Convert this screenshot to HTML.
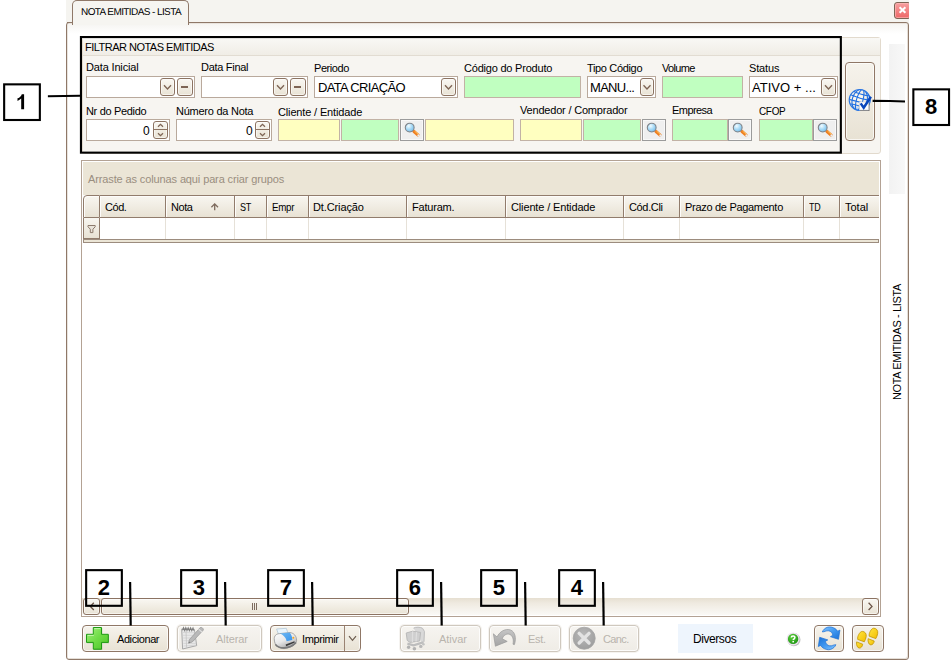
<!DOCTYPE html>
<html>
<head>
<meta charset="utf-8">
<title>NOTA EMITIDAS - LISTA</title>
<style>
*{box-sizing:border-box;margin:0;padding:0}
html,body{width:952px;height:661px;overflow:hidden;background:#fff}
body{position:relative;font-family:"Liberation Sans",sans-serif;font-size:11px;color:#000}
.a,svg{position:absolute}
.t{position:absolute;white-space:nowrap;line-height:13px;font-size:11px;color:#000}
.fld{position:absolute;height:22px;border:1px solid #b9a99c;background:#fff}
.g{background:#c0ffc0;border-color:#c2b2a5}
.y{background:#ffffc0;border-color:#c2b2a5}
.btn{position:absolute;border:1px solid #8c7362;border-radius:3px;background:linear-gradient(#f9f7f2,#e9e3d5);box-shadow:inset 0 0 0 1px rgba(255,255,255,.55)}
.mb{position:absolute;width:24px;height:22px;border:1px solid #9b9b9b;background:#efefef;box-shadow:inset 0 0 0 1px #f8f8f8}
.big{position:absolute;border:1px solid #8f7766;border-radius:4px;background:linear-gradient(#f6f3ec,#e8e2d4);box-shadow:inset 0 0 0 1px rgba(255,255,255,.7)}
.dis{border-color:#cfc8be;background:linear-gradient(#f6f4f0,#efece6);box-shadow:inset 0 0 0 1px rgba(255,255,255,.8),0 0 0 1px rgba(225,220,212,.35)}
.ann{position:absolute;width:38px;height:38px;border:2px solid #000}
.ln{position:absolute;background:#000}
.hd{position:absolute;top:195px;height:23px;border:1px solid #917c6c;border-left:none;background:linear-gradient(#f8f6f0,#f1ede4 45%,#e8e2d4);box-shadow:inset 1px 1px 0 #fdfcfa}
.fc{position:absolute;top:218px;height:21px;border-right:1px solid #e6e1d8;background:#fff}
</style>
</head>
<body>
<!-- top strip + window frame -->
<div class="a" style="left:66px;top:0;width:843px;height:24px;background:#f5f4f0"></div>
<div class="a" style="left:66px;top:22px;width:843px;height:638px;border:1px solid #8f7868;border-radius:3px;background:#fff;box-shadow:inset 1px 1px 0 #e9e4de,inset -1px -1px 0 #e4ded7"></div>
<div class="a" style="left:68px;top:24px;width:839px;height:10px;background:linear-gradient(#f6f5f2,#fff)"></div>
<!-- tab -->
<div class="a" style="left:72px;top:0;width:117px;height:25px;border:1px solid #8f7868;border-bottom:none;border-radius:5px 5px 0 0;background:#f6f5f1"></div>
<div class="a" style="left:67px;top:22px;width:6px;height:1px;background:#8f7868"></div>
<!-- close btn -->
<div class="a" style="left:894px;top:2px;width:17px;height:17px;border:1px solid #7d6555;border-radius:3px;background:linear-gradient(#f6a0a0,#ee6868);box-shadow:inset 0 0 0 1px rgba(255,190,190,.6)"></div>
<svg style="left:894px;top:2px" width="17" height="17"><path d="M5.6 5.2L11.4 10.8M11.4 5.2L5.6 10.8" stroke="#fff" stroke-width="2" fill="none"/></svg>
<div class="a" style="left:909px;top:0;width:43px;height:661px;background:#fff"></div>

<!-- right strip + vertical caption -->
<div class="a" style="left:889px;top:44px;width:16px;height:150px;background:linear-gradient(90deg,#f2f2f2,#f8f8f8)"></div>

<!-- filter group -->
<div class="a" style="left:82px;top:37px;width:799px;height:117px;background:#f7f5f1;border:1px solid #e2dacd;border-radius:3px"></div>
<div class="a" style="left:83px;top:38px;width:797px;height:18px;background:linear-gradient(#f9f8f5,#f0ede6);border-bottom:1px solid #e2dcd2"></div>

<!-- row1 fields -->
<div class="fld" style="left:86px;top:76px;width:109px"></div>
<div class="btn" style="left:160px;top:78px;width:15px;height:18px"></div>
<svg style="left:160px;top:78px" width="15" height="18"><path d="M4 7.2L7.5 11L11 7.2" stroke="#7d6454" stroke-width="1.3" fill="none"/></svg>
<div class="btn" style="left:177px;top:78px;width:16px;height:18px"></div>
<div class="a" style="left:181px;top:86px;width:7px;height:2px;background:#7d6454"></div>
<div class="fld" style="left:201px;top:76px;width:107px"></div>
<div class="btn" style="left:273px;top:78px;width:15px;height:18px"></div>
<svg style="left:273px;top:78px" width="15" height="18"><path d="M4 7.2L7.5 11L11 7.2" stroke="#7d6454" stroke-width="1.3" fill="none"/></svg>
<div class="btn" style="left:290px;top:78px;width:16px;height:18px"></div>
<div class="a" style="left:294px;top:86px;width:7px;height:2px;background:#7d6454"></div>
<div class="fld" style="left:314px;top:76px;width:144px"></div>
<div class="btn" style="left:441px;top:78px;width:15px;height:18px"></div>
<svg style="left:441px;top:78px" width="15" height="18"><path d="M4 7.2L7.5 11L11 7.2" stroke="#7d6454" stroke-width="1.3" fill="none"/></svg>
<div class="fld g" style="left:464px;top:76px;width:117px"></div>
<div class="fld" style="left:587px;top:76px;width:69px"></div>
<div class="btn" style="left:640px;top:78px;width:14px;height:18px"></div>
<svg style="left:640px;top:78px" width="14" height="18"><path d="M3.5 7.2L7 11L10.5 7.2" stroke="#7d6454" stroke-width="1.3" fill="none"/></svg>
<div class="fld g" style="left:662px;top:76px;width:81px"></div>
<div class="fld" style="left:749px;top:76px;width:89px"></div>
<div class="btn" style="left:821px;top:78px;width:15px;height:18px"></div>
<svg style="left:821px;top:78px" width="15" height="18"><path d="M4 7.2L7.5 11L11 7.2" stroke="#7d6454" stroke-width="1.3" fill="none"/></svg>

<!-- row2 fields -->
<div class="fld" style="left:86px;top:119px;width:84px"></div>
<div class="btn" style="left:153px;top:121px;width:15px;height:18px"></div>
<div class="a" style="left:154px;top:129px;width:13px;height:1px;background:#8c7362"></div>
<svg style="left:153px;top:121px" width="15" height="18"><path d="M5 5.8L7.5 3.4L10 5.8M5 12.2L7.5 14.6L10 12.2" stroke="#7d6454" stroke-width="1.3" fill="none"/></svg>
<div class="fld" style="left:176px;top:119px;width:96px"></div>
<div class="btn" style="left:255px;top:121px;width:15px;height:18px"></div>
<div class="a" style="left:256px;top:129px;width:13px;height:1px;background:#8c7362"></div>
<svg style="left:255px;top:121px" width="15" height="18"><path d="M5 5.8L7.5 3.4L10 5.8M5 12.2L7.5 14.6L10 12.2" stroke="#7d6454" stroke-width="1.3" fill="none"/></svg>
<div class="fld y" style="left:278px;top:119px;width:62px"></div>
<div class="fld g" style="left:341px;top:119px;width:58px"></div>
<div class="mb" style="left:400px;top:119px"></div>
<div class="fld y" style="left:425px;top:119px;width:89px"></div>
<div class="fld y" style="left:520px;top:119px;width:62px"></div>
<div class="fld g" style="left:583px;top:119px;width:58px"></div>
<div class="mb" style="left:642px;top:119px"></div>
<div class="fld g" style="left:672px;top:119px;width:56px"></div>
<div class="mb" style="left:728px;top:119px"></div>
<div class="fld g" style="left:759px;top:119px;width:54px"></div>
<div class="mb" style="left:813px;top:119px"></div>
<svg width="0" height="0"><defs>
<radialGradient id="lens" cx="38%" cy="32%" r="75%"><stop offset="0" stop-color="#f2fbff"/><stop offset=".5" stop-color="#a9dbf7"/><stop offset="1" stop-color="#6fbaec"/></radialGradient>
</defs></svg>
<svg style="left:400px;top:119px" width="24" height="22"><path d="M12.6 11.3L14 12.5" stroke="#6f6f6f" stroke-width="1.6"/><path d="M14 12.5L18.1 16.1" stroke="#ef7f22" stroke-width="3.1" stroke-linecap="round"/><path d="M14.6 12.2L18.4 15.3" stroke="#ffc85a" stroke-width=".9"/><path d="M18.2 16.3L18.9 16.9" stroke="#e8eef4" stroke-width="1.8" stroke-linecap="round"/><circle cx="9.7" cy="8.6" r="4.4" fill="url(#lens)" stroke="#80858b" stroke-width="1.1"/></svg>
<svg style="left:642px;top:119px" width="24" height="22"><path d="M12.6 11.3L14 12.5" stroke="#6f6f6f" stroke-width="1.6"/><path d="M14 12.5L18.1 16.1" stroke="#ef7f22" stroke-width="3.1" stroke-linecap="round"/><path d="M14.6 12.2L18.4 15.3" stroke="#ffc85a" stroke-width=".9"/><path d="M18.2 16.3L18.9 16.9" stroke="#e8eef4" stroke-width="1.8" stroke-linecap="round"/><circle cx="9.7" cy="8.6" r="4.4" fill="url(#lens)" stroke="#80858b" stroke-width="1.1"/></svg>
<svg style="left:728px;top:119px" width="24" height="22"><path d="M12.6 11.3L14 12.5" stroke="#6f6f6f" stroke-width="1.6"/><path d="M14 12.5L18.1 16.1" stroke="#ef7f22" stroke-width="3.1" stroke-linecap="round"/><path d="M14.6 12.2L18.4 15.3" stroke="#ffc85a" stroke-width=".9"/><path d="M18.2 16.3L18.9 16.9" stroke="#e8eef4" stroke-width="1.8" stroke-linecap="round"/><circle cx="9.7" cy="8.6" r="4.4" fill="url(#lens)" stroke="#80858b" stroke-width="1.1"/></svg>
<svg style="left:813px;top:119px" width="24" height="22"><path d="M12.6 11.3L14 12.5" stroke="#6f6f6f" stroke-width="1.6"/><path d="M14 12.5L18.1 16.1" stroke="#ef7f22" stroke-width="3.1" stroke-linecap="round"/><path d="M14.6 12.2L18.4 15.3" stroke="#ffc85a" stroke-width=".9"/><path d="M18.2 16.3L18.9 16.9" stroke="#e8eef4" stroke-width="1.8" stroke-linecap="round"/><circle cx="9.7" cy="8.6" r="4.4" fill="url(#lens)" stroke="#80858b" stroke-width="1.1"/></svg>

<!-- big globe button -->
<div class="big" style="left:845px;top:62px;width:30px;height:79px"></div>
<svg style="left:844px;top:84px" width="34" height="32"><defs>
<radialGradient id="gg" cx="40%" cy="36%" r="68%"><stop offset="0" stop-color="#fffdf6"/><stop offset=".6" stop-color="#f1ece4"/><stop offset=".85" stop-color="#a9c8f0"/><stop offset="1" stop-color="#2f7be0"/></radialGradient>
<clipPath id="gc"><circle cx="15.7" cy="16" r="10.7"/></clipPath></defs>
<circle cx="15.7" cy="16" r="10.7" fill="url(#gg)"/>
<g clip-path="url(#gc)" stroke="#2270e0" stroke-width="1.1" fill="none" transform="rotate(16 15.7 16)">
<ellipse cx="15.7" cy="16" rx="3.2" ry="10.9"/><ellipse cx="15.7" cy="16" rx="7.4" ry="10.9"/>
<path d="M4 8.6Q15.7 11.4 27.4 8.6M4 13.4Q15.7 15 27.4 13.4M4 18.4Q15.7 17.6 27.4 18.4M4 23Q15.7 20.6 27.4 23"/>
</g>
<circle cx="15.7" cy="16" r="10.5" fill="none" stroke="#2a76e2" stroke-width="1.1"/>
<rect x="16.1" y="18.8" width="9.4" height="8.2" fill="#6f6f6f"/>
<rect x="15.3" y="18" width="9.3" height="8" fill="#fff" stroke="#c9cdd4" stroke-width=".6"/>
<path d="M16.7 19.4L19.7 23.8L26.9 12.8" stroke="#0a47bc" stroke-width="2.5" fill="none" stroke-linejoin="miter"/>
</svg>

<!-- grid -->
<div class="a" style="left:81px;top:160px;width:800px;height:457px;border:1px solid #b3a294;background:#fff"></div>
<div class="a" style="left:83px;top:162px;width:796px;height:33px;background:#ebe5d6"></div>
<div class="hd" style="left:83px;width:17px;border-left:1px solid #917c6c;border-radius:4px 0 0 0"></div>
<div class="hd" style="left:100px;width:66px"></div>
<div class="hd" style="left:166px;width:69px"></div>
<div class="hd" style="left:235px;width:32px"></div>
<div class="hd" style="left:267px;width:42px"></div>
<div class="hd" style="left:309px;width:98px"></div>
<div class="hd" style="left:407px;width:99px"></div>
<div class="hd" style="left:506px;width:118px"></div>
<div class="hd" style="left:624px;width:56px"></div>
<div class="hd" style="left:680px;width:124px"></div>
<div class="hd" style="left:804px;width:36px"></div>
<div class="hd" style="left:840px;width:39px;border-right:none"></div>
<svg style="left:210px;top:203px" width="10" height="9"><path d="M4.7 .9V7.3M1.4 4.2L4.7 .9L8 4.2" stroke="#7d6a5c" stroke-width="1.3" fill="none"/></svg>
<!-- filter row -->
<div class="fc" style="left:83px;width:17px;background:linear-gradient(#f8f6f0,#e8e2d4);border:1px solid #917c6c;border-top:none"></div>
<div class="fc" style="left:100px;width:66px"></div>
<div class="fc" style="left:166px;width:69px"></div>
<div class="fc" style="left:235px;width:32px"></div>
<div class="fc" style="left:267px;width:42px"></div>
<div class="fc" style="left:309px;width:98px"></div>
<div class="fc" style="left:407px;width:99px"></div>
<div class="fc" style="left:506px;width:118px"></div>
<div class="fc" style="left:624px;width:56px"></div>
<div class="fc" style="left:680px;width:124px"></div>
<div class="fc" style="left:804px;width:36px"></div>
<svg style="left:86px;top:224px" width="11" height="11"><path d="M2 1.5H9.2V2.8L6.9 5.2V8.6H4.3V5.2L2 2.8Z" stroke="#8c7a6c" stroke-width="1" fill="#e9e4da"/></svg>
<div class="a" style="left:83px;top:239px;width:796px;height:4px;border:1px solid #9c8c7e;background:#ebe5d6"></div>
<!-- h scrollbar -->
<div class="a" style="left:82px;top:598px;width:797px;height:17px;background:linear-gradient(#e6dfd1,#efeae0 30%,#faf9f6)"></div>
<div class="btn" style="left:83px;top:598px;width:17px;height:17px;border-color:#8c7362"></div>
<svg style="left:83px;top:598px" width="17" height="17"><path d="M10.8 4.8L7.4 8.4L10.8 12" stroke="#6b5447" stroke-width="1.3" fill="none"/></svg>
<div class="btn" style="left:101px;top:598px;width:308px;height:17px;border-color:#8c7362"></div>
<div class="a" style="left:252px;top:603px;width:1px;height:7px;background:#7d6c5f"></div>
<div class="a" style="left:254px;top:603px;width:1px;height:7px;background:#7d6c5f"></div>
<div class="a" style="left:256px;top:603px;width:1px;height:7px;background:#7d6c5f"></div>
<div class="btn" style="left:862px;top:598px;width:17px;height:17px;border-color:#8c7362"></div>
<svg style="left:862px;top:598px" width="17" height="17"><path d="M6.6 4.8L10 8.4L6.6 12" stroke="#6b5447" stroke-width="1.3" fill="none"/></svg>

<!-- bottom buttons -->
<div class="big" style="left:82px;top:625px;width:87px;height:27px"></div>
<div class="big dis" style="left:177px;top:625px;width:85px;height:27px"></div>
<div class="big" style="left:270px;top:625px;width:91px;height:27px"></div>
<div class="a" style="left:344px;top:626px;width:1px;height:25px;background:#9a8372"></div>
<svg style="left:346px;top:632px" width="13" height="12"><path d="M3 4.2L6.5 8.4L10 4.2" stroke="#6d5d50" stroke-width="1.2" fill="none"/></svg>
<div class="big dis" style="left:400px;top:625px;width:81px;height:27px"></div>
<div class="big dis" style="left:489px;top:625px;width:72px;height:27px"></div>
<div class="big dis" style="left:569px;top:625px;width:70px;height:27px"></div>
<div class="a" style="left:678px;top:624px;width:75px;height:29px;background:#eef5fd"></div>
<div class="big" style="left:814px;top:625px;width:30px;height:27px"></div>
<div class="big" style="left:852px;top:625px;width:32px;height:27px"></div>
<svg style="left:85px;top:626px" width="26" height="26"><defs><linearGradient id="pg" x1="0" y1="0" x2="1" y2="1"><stop offset="0" stop-color="#a4f07e"/><stop offset=".5" stop-color="#6fdc46"/><stop offset="1" stop-color="#4cc42a"/></linearGradient></defs>
<path d="M9 2.2H17.3V9H24V17.3H17.3V24H9V17.3H2.2V9H9Z" fill="#3d8f2a" opacity=".35"/>
<path d="M8.3 1.5H16.5V8.3H23.3V16.4H16.5V23.2H8.3V16.4H1.5V8.3H8.3Z" fill="url(#pg)" stroke="#1f9a14" stroke-width="1"/>
<path d="M9.3 2.6H15.4M2.6 9.4H8.8" stroke="#c9f7b4" stroke-width=".9" fill="none"/></svg>
<svg style="left:176px;top:622px" width="40" height="32">
<path d="M5.7 7L18.4 7.4L20.7 23.6L6.6 27Z" fill="#e9e9e9" stroke="#a9a9a9" stroke-width="1"/>
<path d="M7 10.5L18.6 10.8M7 13.3H19M7.2 16H19.4M7.3 18.7H19.8M7.4 21.4H20.2M7.5 24L20 23.2" stroke="#cfcfcf" stroke-width=".7"/>
<path d="M10 9L10.6 26" stroke="#c4c4c4" stroke-width=".8"/>
<path d="M6.5 8.3L7.5 5.7L8.7 8.5L9.8 5.7L11 8.5L12.2 5.8L13.4 8.6L14.6 5.9L15.8 8.7L17 6L17.9 8.6" stroke="#7f7f7f" stroke-width="1.1" fill="none"/>
<path d="M24.2 5.6C25.5 4.8 27.6 6.3 27.4 8L16.2 20L12.6 21.2L13.4 17.6Z" fill="#b9b9b9" stroke="#9d9d9d" stroke-width=".8"/>
<path d="M22.6 7.2L26 10.2" stroke="#e3e3e3" stroke-width="1.1"/>
<path d="M12.6 21.2L13 19.4L14.4 20.6Z" fill="#777"/></svg>
<svg style="left:268px;top:622px" width="40" height="32"><defs>
<linearGradient id="prb" x1="0" y1="0" x2=".6" y2="1"><stop offset="0" stop-color="#ffffff"/><stop offset=".55" stop-color="#e8e8e8"/><stop offset="1" stop-color="#a8a8a8"/></linearGradient>
<linearGradient id="prl" x1="0" y1="0" x2="1" y2="1"><stop offset="0" stop-color="#6fbaf5"/><stop offset="1" stop-color="#3b95ea"/></linearGradient></defs>
<path d="M8.6 7L18.3 6.3L20.2 11.8L10.6 12.6Z" fill="#e9f5fd" stroke="#b3c6d6" stroke-width=".8"/>
<path d="M6.3 18C5.8 13.8 8.2 11.8 11.6 11.6L22 10.6C26 11 28.6 14.3 28.6 18.3C28.7 22 24 25.6 16.2 26.6C10.4 26.8 6.7 23.2 6.3 18Z" fill="url(#prb)" stroke="#9c9c9c" stroke-width=".9"/>
<path d="M11.6 11.6L21.6 10.4C23.6 12.6 24.6 15.4 24.2 18L18.6 19.2C18.2 16 15.6 13 11.6 11.6Z" fill="url(#prl)"/>
<path d="M17.6 22.6L26.4 19.2L26.8 20.6L18.2 24.2Z" fill="#3c3c3c"/>
<path d="M7.4 22.4C10.4 27 21 27.6 28 20.6" stroke="#7a7a7a" stroke-width="1.6" fill="none"/>
<circle cx="25.3" cy="15.8" r="1" fill="#f6a41e"/></svg>
<svg style="left:398px;top:622px" width="40" height="32">
<path d="M15.6 6.2C17 4.8 23 4.8 24.6 6.4L26.4 9.4L26 19.4L24.4 21.4" fill="#d9d9d9" stroke="#bcbcbc" stroke-width="1"/>
<path d="M8.2 11L14.6 9.2L22.6 10.4L21.6 19L12 20.4L9.2 18.4Z" fill="#cfcfcf" stroke="#b6b6b6" stroke-width=".9"/>
<path d="M14.6 9.4L14.4 20M18.6 10L18 19.6" stroke="#dedede" stroke-width="1.2"/>
<path d="M9.4 21.6L15.6 23.4L25 20.4" stroke="#bdbdbd" stroke-width="2.2" fill="none"/>
<circle cx="10.6" cy="25.2" r="1.7" fill="#b2b2b2"/><circle cx="16.4" cy="26.8" r="1.8" fill="#b2b2b2"/><circle cx="22.8" cy="24.4" r="1.7" fill="#b8b8b8"/><circle cx="25.4" cy="22.2" r="1.3" fill="#c2c2c2"/></svg>
<svg style="left:486px;top:622px" width="40" height="32"><defs><linearGradient id="ug" x1="0" y1="0" x2="0" y2="1"><stop offset="0" stop-color="#c6c6c6"/><stop offset="1" stop-color="#a4a4a4"/></linearGradient></defs>
<path d="M7.4 11.8L11 15C13.6 9.4 19.6 6.2 24.6 8C29 9.8 30.6 15.8 28.4 22.6L27 22.2C28 17.2 26.6 13.4 23.2 12.2C20.2 11.4 17.6 13.4 16.2 16.8L21.2 19.4L9.4 24.2Z" fill="url(#ug)" stroke="#9a9a9a" stroke-width=".7"/></svg>
<svg style="left:566px;top:622px" width="40" height="32"><defs><radialGradient id="xg" cx="45%" cy="35%" r="70%"><stop offset="0" stop-color="#b9b9b9"/><stop offset="1" stop-color="#9c9c9c"/></radialGradient></defs>
<circle cx="18.2" cy="16.2" r="11" fill="url(#xg)" stroke="#a6a6a6" stroke-width=".8"/>
<path d="M13.2 11.4L23 21M23 11.4L13.2 21" stroke="#e3e3e3" stroke-width="3.4" stroke-linecap="round"/></svg>
<svg style="left:784px;top:630px" width="20" height="20"><defs><radialGradient id="hg" cx="40%" cy="32%" r="70%"><stop offset="0" stop-color="#5fd23c"/><stop offset="1" stop-color="#1f9616"/></radialGradient></defs>
<circle cx="9.9" cy="9.7" r="6.6" fill="#8a8a8a" opacity=".55"/>
<circle cx="9.1" cy="8.9" r="6.5" fill="#ece2ee"/>
<circle cx="9.1" cy="8.9" r="5.2" fill="url(#hg)"/>
<path d="M7.3 7.6C7.3 5.4 10.9 5.4 10.9 7.5C10.9 8.8 9.2 8.8 9.2 10.1" stroke="#fff" stroke-width="1.5" fill="none"/><rect x="8.4" y="10.9" width="1.6" height="1.5" fill="#fff"/></svg>
<svg style="left:814px;top:625px" width="30" height="27"><defs><linearGradient id="rg" x1="0" y1="0" x2="1" y2="1"><stop offset="0" stop-color="#86c6ff"/><stop offset=".5" stop-color="#3f97f0"/><stop offset="1" stop-color="#1a70d6"/></linearGradient></defs>
<g id="ra"><path d="M8.3 6.9C9 5 11 3 13.8 2.1C15 1.8 16.5 1.8 17.5 2.1C19 2.5 20.3 3.1 21.1 3.6C22.2 4.4 23.2 5.4 23.7 6.2L25.9 5.1L24.5 14.3L16.4 11.7L18.9 10.2C18.6 9 18 8 17.5 7.3C16.6 6.4 15.5 5.9 14.5 5.8C13.3 5.7 12.3 5.9 11.6 6.2C10.5 6.6 9.3 7 8.3 6.9Z" fill="url(#rg)" stroke="#1c6fd4" stroke-width=".7"/></g>
<use href="#ra" transform="rotate(180 15.1 13.3)"/></svg>
<svg style="left:852px;top:625px" width="32" height="27"><defs><linearGradient id="fg" x1="0" y1="0" x2="1" y2="1"><stop offset="0" stop-color="#ffe640"/><stop offset="1" stop-color="#f2bc00"/></linearGradient></defs>
<g id="ft"><path d="M10.3 6.4C12.8 6.4 14.7 8.6 14.2 11.6C13.9 13.6 13.1 15.4 12.3 16.8L5.7 14.4C5.5 12.6 5.9 11 6.7 9.6C7.6 7.8 8.8 6.4 10.3 6.4Z" fill="url(#fg)" stroke="#c39600" stroke-width=".8"/>
<path d="M4.6 16.9L10.7 19.2C10.5 21.5 9 23.1 7.3 23.1C5.3 22.9 4.2 20 4.6 16.9Z" fill="url(#fg)" stroke="#c39600" stroke-width=".8"/></g>
<use href="#ft" transform="translate(11.5 -3.2)"/></svg>

<div class="t" style="left:81px;top:7px;font-size:10px;line-height:12px;letter-spacing:-0.59px;text-rendering:geometricPrecision;">NOTA EMITIDAS - LISTA</div>
<div class="t" style="left:85px;top:41px;letter-spacing:-0.51px;">FILTRAR NOTAS EMITIDAS</div>
<div class="t" style="left:86px;top:61px;letter-spacing:-0.16px;">Data Inicial</div>
<div class="t" style="left:201px;top:61px;letter-spacing:-0.29px;">Data Final</div>
<div class="t" style="left:314px;top:62px;letter-spacing:-0.44px;">Periodo</div>
<div class="t" style="left:464px;top:62px;letter-spacing:-0.21px;">Código do Produto</div>
<div class="t" style="left:587px;top:62px;letter-spacing:-0.34px;">Tipo Código</div>
<div class="t" style="left:662px;top:62px;letter-spacing:-0.68px;">Volume</div>
<div class="t" style="left:749px;top:62px;letter-spacing:-0.16px;">Status</div>
<div class="t" style="left:318px;top:80px;font-size:13px;line-height:15px;letter-spacing:-0.66px;">DATA CRIAÇÃO</div>
<div class="t" style="left:590px;top:80px;font-size:13px;line-height:15px;letter-spacing:-0.69px;">MANU...</div>
<div class="t" style="left:752px;top:80px;font-size:13px;line-height:15px;letter-spacing:0.02px;">ATIVO + ...</div>
<div class="t" style="left:86px;top:105px;letter-spacing:-0.33px;">Nr do Pedido</div>
<div class="t" style="left:176px;top:105px;letter-spacing:-0.25px;">Número da Nota</div>
<div class="t" style="left:278px;top:106px;letter-spacing:-0.15px;">Cliente / Entidade</div>
<div class="t" style="left:520px;top:104px;letter-spacing:-0.19px;">Vendedor / Comprador</div>
<div class="t" style="left:672px;top:104px;letter-spacing:-0.56px;">Empresa</div>
<div class="t" style="left:759px;top:105px;letter-spacing:-0.35px;transform:scaleX(0.905);transform-origin:0 0;">CFOP</div>
<div class="t" style="left:143px;top:124px;font-size:12px;line-height:14px;letter-spacing:-0.19px;">0</div>
<div class="t" style="left:246px;top:124px;font-size:12px;line-height:14px;letter-spacing:-0.19px;">0</div>
<div class="t" style="left:88px;top:173px;color:#9a8e80;letter-spacing:-0.12px;">Arraste as colunas aqui para criar grupos</div>
<div class="t" style="left:105px;top:201px;letter-spacing:-0.45px;">Cód.</div>
<div class="t" style="left:171px;top:201px;letter-spacing:-0.42px;">Nota</div>
<div class="t" style="left:240px;top:201px;letter-spacing:-0.35px;transform:scaleX(0.824);transform-origin:0 0;">ST</div>
<div class="t" style="left:272px;top:201px;letter-spacing:-0.35px;transform:scaleX(0.888);transform-origin:0 0;">Empr</div>
<div class="t" style="left:313px;top:201px;letter-spacing:-0.12px;">Dt.Criação</div>
<div class="t" style="left:412px;top:201px;letter-spacing:-0.20px;">Faturam.</div>
<div class="t" style="left:511px;top:201px;letter-spacing:-0.14px;">Cliente / Entidade</div>
<div class="t" style="left:629px;top:201px;letter-spacing:-0.35px;">Cód.Cli</div>
<div class="t" style="left:685px;top:201px;letter-spacing:-0.30px;">Prazo de Pagamento</div>
<div class="t" style="left:809px;top:201px;letter-spacing:-0.35px;transform:scaleX(0.810);transform-origin:0 0;">TD</div>
<div class="t" style="left:845px;top:201px;letter-spacing:-0.01px;">Total</div>
<div class="t" style="left:117px;top:633px;letter-spacing:-0.42px;">Adicionar</div>
<div class="t" style="left:216px;top:633px;color:#b9b4ad;letter-spacing:-0.07px;">Alterar</div>
<div class="t" style="left:302px;top:633px;letter-spacing:-0.40px;">Imprimir</div>
<div class="t" style="left:439px;top:633px;color:#b9b4ad;letter-spacing:-0.05px;">Ativar</div>
<div class="t" style="left:528px;top:633px;color:#b9b4ad;letter-spacing:-0.32px;">Est.</div>
<div class="t" style="left:603px;top:633px;color:#b9b4ad;letter-spacing:-0.61px;">Canc.</div>
<div class="t" style="left:693px;top:632px;font-size:12px;line-height:14px;letter-spacing:-0.43px;">Diversos</div>
<div class="t" style="left:896.8px;top:341.8px;letter-spacing:-0.36px;transform:translate(-50%,-50%) rotate(-90deg)">NOTA EMITIDAS - LISTA</div>

<!-- annotations -->
<svg style="left:0;top:0" width="952" height="661" fill="none" stroke="#000" stroke-width="2.1">
<rect x="80.95" y="37.05" width="759.9" height="115.6"/>
<rect x="4.15" y="84.35" width="35.7" height="35.65"/>
<rect x="913.35" y="89.35" width="35.7" height="35.65"/>
<rect x="86.15" y="570.15" width="35.7" height="35.65"/>
<path d="M130.10 582L130.70 625.4" stroke-width="2.2"/>
<rect x="181.15" y="570.15" width="35.7" height="35.65"/>
<path d="M225.10 582L225.70 625.4" stroke-width="2.2"/>
<rect x="268.15" y="570.15" width="35.7" height="35.65"/>
<path d="M312.10 582L312.70 625.4" stroke-width="2.2"/>
<rect x="397.15" y="570.15" width="35.7" height="35.65"/>
<path d="M441.10 582L441.70 625.4" stroke-width="2.2"/>
<rect x="481.15" y="570.15" width="35.7" height="35.65"/>
<path d="M525.10 582L525.70 625.4" stroke-width="2.2"/>
<rect x="559.15" y="570.15" width="35.7" height="35.65"/>
<path d="M603.10 582L603.70 625.4" stroke-width="2.2"/>
<path d="M47.9 96.2L80 95.8"/>
<path d="M872.6 100.9L890 101L905 101.5"/>
</svg>
<svg style="left:0;top:0" width="60" height="130"><path d="M21.4 25H18.5V14.3C17.5 15.3 16.2 16.1 14.8 16.6V14C15.5 13.8 16.4 13.3 17.3 12.6C18.2 11.9 18.8 11.1 19.1 10H21.4Z" fill="#000" transform="translate(2.70 84.30)"/></svg>
<div class="t" style="left:912.3px;top:94px;width:37.8px;text-align:center;font-weight:bold;font-size:22px;line-height:25px">8</div>
<div class="t" style="left:85.1px;top:575px;width:37.8px;text-align:center;font-weight:bold;font-size:22px;line-height:25px">2</div>
<div class="t" style="left:180.1px;top:575px;width:37.8px;text-align:center;font-weight:bold;font-size:22px;line-height:25px">3</div>
<div class="t" style="left:267.1px;top:575px;width:37.8px;text-align:center;font-weight:bold;font-size:22px;line-height:25px">7</div>
<div class="t" style="left:396.1px;top:575px;width:37.8px;text-align:center;font-weight:bold;font-size:22px;line-height:25px">6</div>
<div class="t" style="left:480.1px;top:575px;width:37.8px;text-align:center;font-weight:bold;font-size:22px;line-height:25px">5</div>
<div class="t" style="left:558.1px;top:575px;width:37.8px;text-align:center;font-weight:bold;font-size:22px;line-height:25px">4</div>
</body>
</html>
